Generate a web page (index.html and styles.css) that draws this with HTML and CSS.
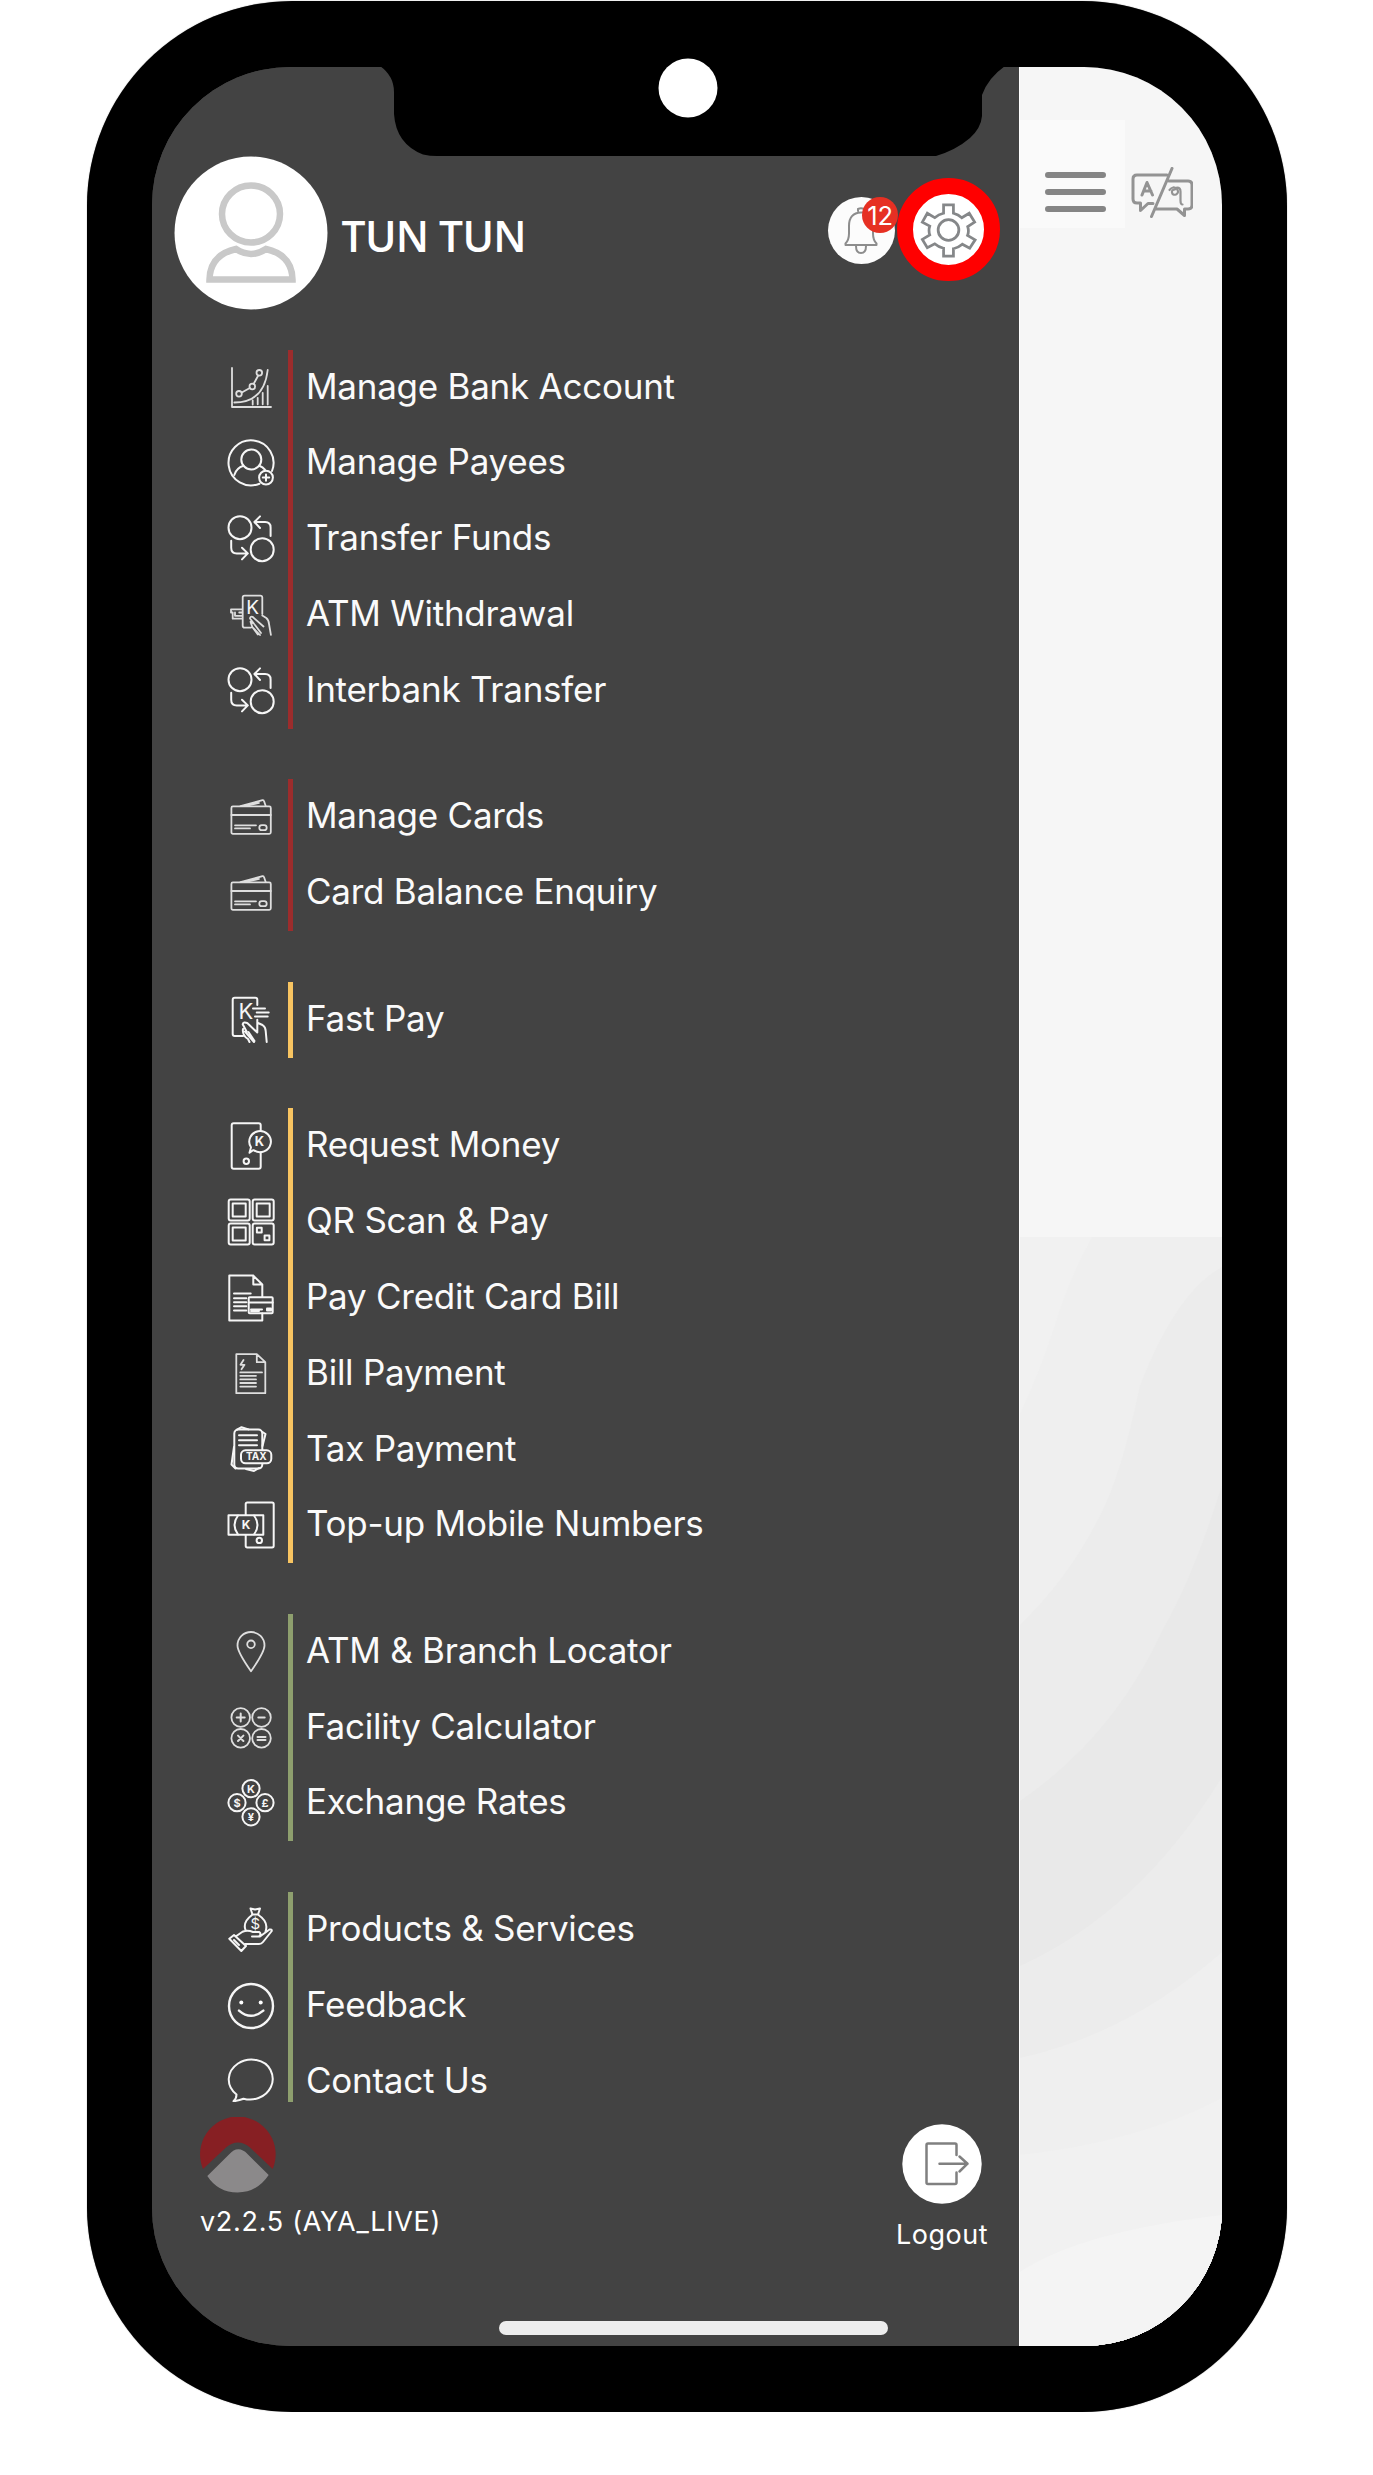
FILE: index.html
```html
<!DOCTYPE html>
<html lang="en">
<head>
<meta charset="utf-8">
<title>Mobile banking menu</title>
<link rel="stylesheet" href="styles.css">
</head>
<body>
<svg class="defs" aria-hidden="true">
  <symbol id="transfer" viewBox="0 0 48 48"><circle cx="13" cy="12.7" r="11.5"/><circle cx="35.2" cy="34.7" r="11.5"/><path d="M43.6 21V12.5q0-5.5-5.5-5.5H27.5M33 1.4L27.4 7l5.6 6M4.2 25.7v7q0 5.7 5.6 5.7h10.9M15 32.8l5.8 5.6-5.8 6"/></symbol>
  <symbol id="cards" viewBox="0 0 48 48"><rect x="4.4" y="13.4" width="39.4" height="27.4" rx="1.5"/><path d="M4.4 22h39.4M13.5 13.2L35.5 7.2q1.2-.3 1.500.8l1.700 5M18 13.2l14-3.300M8 32.300h21M8 35.400h15"/><rect x="32.300" y="32.200" width="7.400" height="5" rx="2.500"/></symbol>
</svg>
<div class="phone">
  <div class="screen">
    <aside class="sidebar">
      <header class="profile">
        <svg class="avatar" viewBox="0 0 154 154"><circle class="disc" cx="77" cy="77" r="76.500"/><g class="person"><ellipse cx="77" cy="58" rx="29" ry="28.500"/><path d="M62 93q15 10 30 0 26 6 26.500 30.500H35.500Q36 99 62 93z"/></g></svg>
        <h1 class="name">TUN TUN</h1>
        <div class="bell">
          <svg viewBox="0 0 66 66"><path d="M17.500 46.500q3.500-3.500 3.500-10V29q0-13 12-13.500T45 29v7.500q0 6.500 3.500 10v1.500h-31zM28 49q0 7 5 7t5-7M30 14v-2q3-1.500 6 0v2"/></svg>
          <span class="badge">12</span>
        </div>
        <div class="settings">
          <svg viewBox="0 0 72 72"><path d="M31 11h10v8.500q5 1.300 8.500 4.500l7.500-4.500 5.500 9-7 4.500q1.500 5-.2 9l7.700 4.500-5.500 8.500-7.500-4q-4 3.500-9 4.500V63H31v-8q-5-1-9-4.500l-7.500 4-5-8.500 7.500-4.500q-1.500-4.500 0-9L9.500 28.500l5-9 7.500 4.500q4-3.500 9-4.500z"/><circle cx="36" cy="36.500" r="10.500"/></svg>
        </div>
      </header>
      <nav class="menu">
        <ul class="group red">
          <li><svg class="dim" viewBox="0 0 48 48"><path d="M5 4v39h39M7.300 38.500Q37 38.500 40.700 6M14.800 28.500l8-4.500M26.600 20l4.500-8.300M25.700 36.500v4M30.700 33.800v6.500M35.700 28.800v11.500M40.700 22v18.500"/><circle cx="12" cy="29.800" r="2.800"/><circle cx="25.300" cy="22.500" r="2.800"/><circle cx="32.300" cy="8.800" r="2.800"/></svg><a>Manage Bank Account</a></li>
          <li><svg viewBox="0 0 48 48"><path d="M32.500 44.700A22.500 22.500 0 1 1 45 32"/><circle cx="24.300" cy="20.500" r="10"/><path d="M7.300 36q2-7 9.200-9.300M32.300 26.700q3.500 1.300 5.600 4"/><circle cx="39" cy="38.600" r="6.900"/><path d="M39 35.400v6.400M35.800 38.600h6.400"/></svg><a>Manage Payees</a></li>
          <li><svg><use href="#transfer"/></svg><a>Transfer Funds</a></li>
          <li><svg class="dim" viewBox="0 0 48 48"><path d="M35.300 23V6.500q0-1.900-1.900-1.900H17.600q-1.900 0-1.900 1.900v28.200q0 1.900 1.900 1.900H24M15.700 18.300H4v3.200h1.700v6.200h10M8 21.500v3.300h7.700M15.700 21.500h-3.500M35.300 24.500l4 2.500q2.500 2 2.800 6.500l1.800 10.300M36.500 35.500L25.500 25.800q-2.500-.5-2.500 1.700l4 5.200-3.500-2 1.800 5.300 7.700 8M25.300 36l5.500 7.500M28 34l6 8"/><text x="25.600" y="22.500" font-size="19">K</text></svg><a>ATM Withdrawal</a></li>
          <li><svg><use href="#transfer"/></svg><a>Interbank Transfer</a></li>
        </ul>
        <ul class="group red">
          <li><svg class="dim"><use href="#cards"/></svg><a>Manage Cards</a></li>
          <li><svg class="dim"><use href="#cards"/></svg><a>Card Balance Enquiry</a></li>
        </ul>
        <ul class="group amber">
          <li><svg viewBox="0 0 48 48"><path d="M30.300 9V3.700q0-2-2-2H7.700q-2 0-2 2V38q0 2 2 2H16M26 12.400h12M29.700 16.400h12M28 20.400h12.700M30.300 23.800v12.700L20.500 27.200q-4-2-4.800 1l4 7.500M31 27l4.500 2q3 2 3.200 6l1 11M16 33q-1 6 5 10l1.500 3M18 35.500l9 10.500M21.500 36l6 9"/><text x="18.800" y="23" font-size="22">K</text></svg><a>Fast Pay</a></li>
        </ul>
        <ul class="group amber">
          <li><svg viewBox="0 0 48 48"><path d="M33.700 8V3.300q0-2-2-2h-25q-2 0-2 2v41.400q0 2 2 2h25q2 0 2-2V30.500"/><path d="M26 28.200l-3.500 2.600 1.500-5.500A10.800 10.500 0 1 1 27 28.300z"/><circle cx="19.300" cy="39.300" r="2.700"/><text class="bold" x="32.500" y="24" font-size="13">K</text></svg><a>Request Money</a></li>
          <li><svg viewBox="0 0 48 48"><rect x="1.700" y="1.400" width="21" height="21" rx="2"/><rect x="25.700" y="1.400" width="21" height="21" rx="2"/><rect x="1.700" y="25.400" width="21" height="21" rx="2"/><rect x="25.700" y="25.400" width="21" height="21" rx="2"/><rect x="5.700" y="5.400" width="13" height="13"/><rect x="29.700" y="5.400" width="13" height="13"/><rect x="5.700" y="29.400" width="13" height="13"/><rect x="29.900" y="29.700" width="4.800" height="4.800"/><rect x="37.600" y="37.400" width="4.800" height="4.800"/></svg><a>QR Scan &amp; Pay</a></li>
          <li><svg viewBox="0 0 48 48"><path d="M35.300 23V10.500L26.300 1.600h-24v45h33V39.500M26.300 1.600v9h9M7 19.600h16.700M7 24.300h12.300M7 28.300h12.300M7 32.300h12.300M7 36.500h12.300M21.700 28.500h24M24 35.500h11M24 37h8"/><rect x="21.700" y="23.300" width="24" height="16" rx="1"/><rect x="40" y="34.500" width="4" height="2"/></svg><a>Pay Credit Card Bill</a></li>
          <li><svg class="dim" viewBox="0 0 48 48"><path d="M9.300 4.200h20.500l8.500 8v31h-29zM29.800 4.200v8h8.500M13.300 22.400H35M13.300 25.800H29M13.300 29.400H29M13.300 33H29M13.300 36.600H29M16.500 10l-3 4.800h4l-3 4.500"/></svg><a>Bill Payment</a></li>
          <li><svg viewBox="0 0 48 48"><rect x="7.300" y="4.600" width="28" height="39" rx="4"/><path d="M12 10.200h18M12 15.200h18M12 20.300h18M10.500 4.400l4-2.200 7 2.200M35.500 7l3 2-3 12M7 22L4.500 39.500l4 4M19 44l8 2 5-3"/><rect class="plate" x="14" y="25.300" width="30.300" height="13" rx="4.500"/><text class="bold" x="29.300" y="35.400" font-size="10">TAX</text></svg><a>Tax Payment</a></li>
          <li><svg viewBox="0 0 48 48"><path d="M18.700 14V3q0-1.600 1.600-1.600h24.800q1.600 0 1.600 1.600v41.800q0 1.600-1.600 1.600H20.300q-1.600 0-1.600-1.600V34"/><rect x="1.500" y="14.200" width="34.800" height="19.600"/><path d="M11 14.500q-7 9.500 0 19M27 14.500q7 9.500 0 19"/><circle cx="32.300" cy="39.400" r="2.700"/><text class="bold" x="19" y="28.300" font-size="12">K</text></svg><a>Top-up Mobile Numbers</a></li>
        </ul>
        <ul class="group green">
          <li><svg class="dim" viewBox="0 0 48 48"><path d="M24 43.300Q10.500 24 10.500 17.500A13.500 13.500 0 0 1 37.500 17.500Q37.500 24 24 43.300z"/><circle cx="24" cy="16.300" r="3.800"/></svg><a>ATM &amp; Branch Locator</a></li>
          <li><svg class="dim" viewBox="0 0 48 48"><circle cx="13.700" cy="13.500" r="9.300"/><circle cx="34.500" cy="13.500" r="9.300"/><circle cx="13.700" cy="34.300" r="9.300"/><circle cx="34.500" cy="34.300" r="9.300"/><path stroke-width="2" d="M9.700 13.500h8M13.700 9.500v8M31.300 13.500h6.400M11 31.600l5.400 5.400M16.400 31.600L11 37M30.500 33h8M30.500 36h8"/></svg><a>Facility Calculator</a></li>
          <li><svg viewBox="0 0 48 48"><circle cx="24" cy="9.600" r="8.600"/><circle cx="10" cy="23.700" r="8.600"/><circle cx="38" cy="23.700" r="8.600"/><circle cx="24" cy="37.800" r="8.600"/><text class="bold" x="24" y="13.600" font-size="11">K</text><text class="bold" x="10" y="27.700" font-size="11">$</text><text class="bold" x="38" y="27.700" font-size="11">£</text><text class="bold" x="24" y="41.800" font-size="11">¥</text></svg><a>Exchange Rates</a></li>
        </ul>
        <ul class="group green">
          <li><svg viewBox="0 0 48 48"><path d="M25.500 8.500l-2-6 4.500 1 5-1-2 6zM25 8.500h6.500M18.500 24Q15.500 16 25 9M31.500 9Q42 16 38.500 25.500M2.300 32.800L7 29l12 11-4.700 5zM7 34l5 5M9 30.300l6.500-4.500q5-2 10.500.2h6q3 1.500 0 4.500h-7M33 30.500l9.500-7q2.500-.5 2.300 1.500L36 36q-1.500 2-4 2H18"/><text x="28.300" y="23" font-size="15">$</text></svg><a>Products &amp; Services</a></li>
          <li><svg class="strong" viewBox="0 0 48 48"><circle cx="24" cy="24" r="22"/><path d="M12 28.600q12 10.400 24.300 0"/><circle class="dot" cx="14.300" cy="20.400" r="2"/><circle class="dot" cx="33.700" cy="20.400" r="2"/></svg><a>Feedback</a></li>
          <li><svg viewBox="0 0 48 48"><path d="M9.500 36.500C-2 27 0 13 11 5.500 22-1.500 38 1 43.500 12c6 12-1 24-12 28-5 2-10 2-15 .7Q12 42.500 6.500 43.300q3-2.800 3-6.800z"/></svg><a>Contact Us</a></li>
        </ul>
      </nav>
      <footer class="footer">
        <div class="about">
          <svg class="logo" viewBox="0 0 76 76"><path fill="#871f23" d="M3 52A37.800 37.800 0 1 1 72.700 52L50 30.500Q38 20.500 26 30.500z"/><path fill="#8b898a" d="M7.300 59L29 37.500Q38 27.500 47.500 37L68.700 58Q57 75.500 37.500 75.500T7.300 59z"/></svg>
          <p class="version">v2.2.5 (AYA_LIVE)</p>
        </div>
        <div class="logout">
          <svg viewBox="0 0 80 80"><circle class="disc" cx="40" cy="40" r="39.700"/><path d="M54.500 31V21q0-1.500-1.500-1.500H26q-1.500 0-1.500 1.500v37.500q0 1.500 1.500 1.500h27q1.500 0 1.500-1.500V48.500M37.500 39.700h28M57.500 32.500l8 7.200-8 7.800"/></svg>
          <p>Logout</p>
        </div>
      </footer>
    </aside>
    <main class="page">
      <div class="toolbar">
        <svg class="burger" viewBox="0 0 61 42"><path d="M3 4h55M3 21h55M3 38h55"/></svg>
        <svg class="lang" viewBox="0 0 62 52"><path d="M36 8H6Q2 8 2 12V32Q2 36 6 36H9.500V43.500L17 36.500H22M41 1.500L20.500 49.500M38 14H57Q61 14 61 18V38Q61 42 57 42H53.500V48.500L46 42H25M11 28L16 15.500 21.500 28M13 24H20"/><path class="glyph" d="M44 22.500q-3.500 0-3 3t4 2q3.500-2 1-5.500-4-3.500-7.500 1M46 20.500q3.500 0 3.500 4v9q0 4 2 4"/></svg>
      </div>
      <svg class="waves" viewBox="0 0 204 1109" preserveAspectRatio="none">
        <path fill="#f1f1f1" d="M0 0H204V1109H0z"/>
        <path fill="#efefef" d="M73 0Q50 40 34 92 20 135 0 177V1109H204V0z"/>
        <path fill="#ececec" d="M204 30Q158 55 121 149 102 240 80 280 50 340 0 388V1109H204z"/>
        <path fill="#e9e9e9" d="M204 248Q175 340 145 391 95 500 0 564V1109H204z"/>
        <path fill="#ececec" d="M204 540Q120 675 0 729V1109H204z"/>
        <path fill="#efefef" d="M204 715Q110 797 0 821V1109H204z"/>
        <path fill="#f1f1f1" d="M204 861Q120 905 0 918V1109H204z"/>
        <path fill="#f4f4f4" d="M204 978Q60 995 0 1035V1109H204z"/>
      </svg>
    </main>
    <div class="home"></div>
  </div>
  <svg class="notch" viewBox="0 0 626 91"><path d="M0 0Q14 10 14 26V48Q16 78 43 88.500Q50 90 57 90H556Q576 84 590 72 601 62 602 50V29Q608 12 625 0z"/><circle class="disc" cx="308" cy="22" r="29.500"/></svg>
</div>
</body>
</html>
```
FILE: styles.css
```css
* { box-sizing: border-box; margin: 0; padding: 0; }
body { background: #fff; font-family: Inter, "Liberation Sans", sans-serif; color: #fff; }
svg { display: block; fill: none; stroke-linecap: round; stroke-linejoin: round; }
.defs { position: absolute; width: 0; height: 0; }
.disc { fill: #fff; stroke: none; }

.phone {
  position: relative;
  width: 1200px;
  height: 2411px;
  margin: 1px 0 0 87px;
  padding: 66px 65px 66px 65px;
  background: #000;
  border-radius: 205px;
  box-shadow: 0 0 1px #666;
}
.screen {
  position: relative;
  display: flex;
  height: 2279px;
  border-radius: 138px;
  overflow: hidden;
  background: #434343;
}
.notch { position: absolute; left: 292.500px; top: 65px; width: 626px; height: 91px; fill: #000; overflow: visible; }
.home { position: absolute; left: 347px; top: 2254px; width: 389px; height: 14px; border-radius: 7px; background: #ededed; }

/* Drawer */
.sidebar { flex: none; width: 867px; padding: 89px 0 0 22px; display: flex; flex-direction: column; background: #434343; }
.profile { display: flex; height: 193.600px; align-items: flex-start; }
.avatar { width: 154px; height: 154px; }
.name { width: 486.500px; margin: 51px 0 0 13.500px; font: 600 42.500px/58px "Open Sans", "Noto Sans", sans-serif; white-space: nowrap; letter-spacing: -.6px; }
.person { stroke: #c9c9c9; stroke-width: 6.500; stroke-linejoin: miter; }
.bell { position: relative; width: 67px; height: 67px; margin-top: 41px; border-radius: 50%; background: #fcfcfc; }
.bell svg { width: 66px; height: 66px; stroke: #8d8d8d; stroke-width: 2; }
.badge { position: absolute; right: -3px; top: 0; width: 36px; height: 36px; border-radius: 50%; background: #e63023; font-size: 25.500px; line-height: 37px; text-align: center; letter-spacing: -.3px; }
.settings { width: 103px; height: 103px; margin: 22px 0 0 2px; border: 16px solid #f00; border-radius: 50%; background: #fff; }
.settings svg { width: 71px; height: 71px; stroke: #858789; stroke-width: 2.800; stroke-linejoin: miter; }

.menu { height: 1752px; margin-left: 53px; overflow: hidden; }
.group { list-style: none; margin-bottom: 50.600px; }
.group li { display: flex; align-items: center; height: 75.850px; }
.group svg { width: 48px; height: 48px; stroke: #f6f6f6; stroke-width: 2; }
.group .dim { stroke: #dedede; stroke-width: 1.800; }
.group .strong { stroke-width: 2.400; }
.group text { fill: #f6f6f6; stroke: none; text-anchor: middle; }
.group .bold { font-weight: 700; }
.group .dot { fill: #fff; stroke: none; }
.group .plate { fill: #434343; }
.group a { height: 100%; margin-left: 12.500px; padding-left: 13.500px; border-left: 5px solid; font-size: 35px; line-height: 73.500px; letter-spacing: -.25px; color: #fafafa; white-space: nowrap; }
.group.red a { border-color: #9c2c2c; }
.group.amber a { border-color: #f8c461; }
.group.green a { border-color: #8e9f6e; }

.footer { display: flex; justify-content: space-between; padding: 15px 31px 0 26px; }
.logo { width: 76px; height: 76px; }
.version { margin-top: 12px; font-size: 27px; line-height: 34px; letter-spacing: .7px; }
.logout { display: flex; flex-direction: column; align-items: center; margin-top: 7px; }
.logout svg { width: 80px; height: 80px; stroke: #808080; stroke-width: 2.500; }
.logout p { margin-top: 14px; font-size: 27px; line-height: 34px; letter-spacing: .5px; }

/* Page behind the drawer */
.page { flex: 1; display: flex; flex-direction: column; justify-content: space-between; background: #f6f6f6; border-left: 1px solid #fff; }
.toolbar { display: flex; align-items: flex-start; width: 105px; height: 108px; margin-top: 53px; padding: 51px 0 0 25px; gap: 25px; background: #fafafa; }
.burger { flex: none; width: 61px; height: 42px; stroke: #858585; stroke-width: 6; }
.lang { flex: none; width: 62px; height: 52px; margin-top: -4px; stroke: #939393; stroke-width: 3; }
.lang .glyph { stroke-width: 2.200; }
.waves { width: 100%; height: 1109px; }
```
